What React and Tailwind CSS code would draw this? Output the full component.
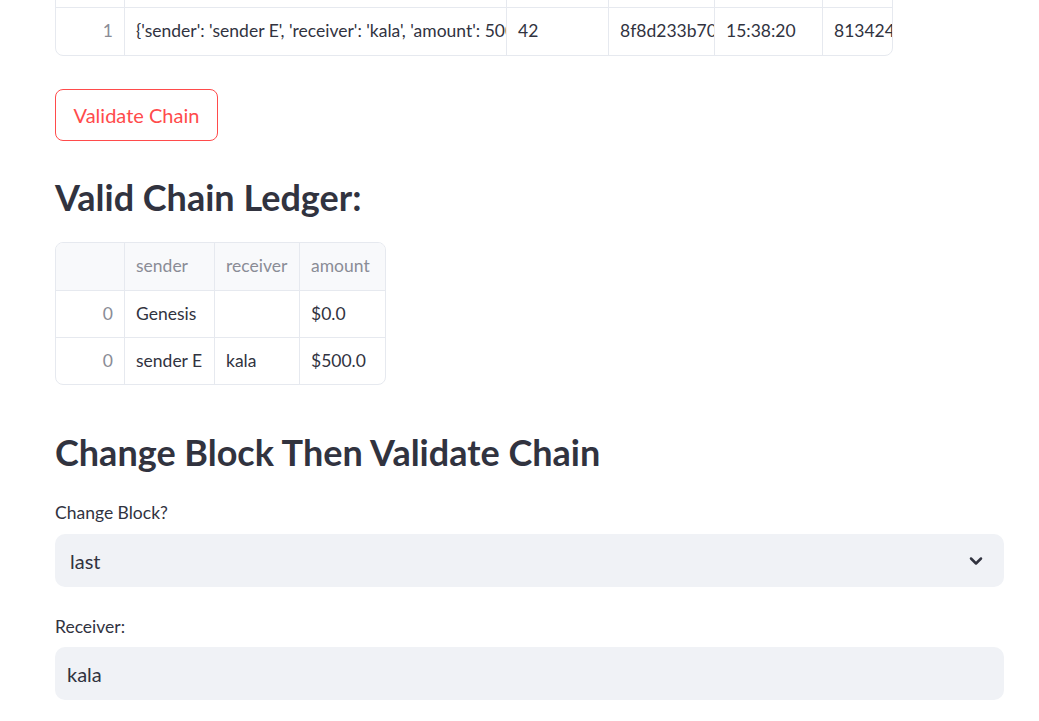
import { ChevronDown } from 'lucide-react'

const font = { fontFamily: '"Source Sans Pro", Lato, "Noto Sans", sans-serif' }

const blockCols = ['w-[69px]', 'w-[382px]', 'w-[102px]', 'w-[106px]', 'w-[108px]', 'w-[120px]']

const blockRows = [
  ['', 'data', 'nonce', 'hash', 'timestamp', 'prev_hash'],
  ['0', "{'sender': 'Genesis', 'receiver': '', 'amount': 0.0}", '0', '0c1f8a3b2e7d', '15:37:02', '0'],
  ['1', "{'sender': 'sender E', 'receiver': 'kala', 'amount': 500.0}", '42', '8f8d233b70e4a9', '15:38:20', '813424'],
]

const ledgerCols = ['w-[69px]', 'w-[90px]', 'w-[85px]', 'w-[86px]']
const ledgerRows = [
  ['0', 'Genesis', '', '$0.0'],
  ['0', 'sender E', 'kala', '$500.0'],
]

function Cell({ children, className = '', header, index }) {
  return (
    <div
      className={`shrink-0 overflow-hidden whitespace-nowrap border-r border-[#e6e9ef] px-[11px] flex items-center text-[17.5px] ${
        header || index ? 'text-[#8a8c96]' : 'text-[#31333f]'
      } ${header ? 'bg-[#f8f9fb]' : ''} ${className}`}
    >
      {children}
    </div>
  )
}

function BlockTable() {
  return (
    <div className="w-[838px] h-[57px] overflow-hidden">
      <div className="-mt-[89px] rounded-lg border border-[#e6e9ef] overflow-hidden w-[838px]">
        {blockRows.map((row, i) => (
          <div key={i} className="flex border-b border-[#e6e9ef] last:border-b-0">
            {row.map((v, j) => (
              <Cell
                key={j}
                header={i === 0}
                index={j === 0}
                className={`h-[47px] ${blockCols[j]} ${j === 0 ? 'justify-end' : ''}`}
              >
                {v}
              </Cell>
            ))}
          </div>
        ))}
      </div>
    </div>
  )
}

function LedgerTable() {
  return (
    <div className="w-[331px] rounded-lg border border-[#e6e9ef] overflow-hidden">
      <div className="flex border-b border-[#e6e9ef]">
        {['', 'sender', 'receiver', 'amount'].map((h, j) => (
          <Cell key={j} header className={`h-[47px] ${ledgerCols[j]} ${j === 3 ? 'border-r-0' : ''}`}>
            {h}
          </Cell>
        ))}
      </div>
      {ledgerRows.map((row, i) => (
        <div key={i} className="flex border-b border-[#e6e9ef] last:border-b-0">
          {row.map((v, j) => (
            <Cell
              key={j}
              index={j === 0}
              className={`h-[46px] ${ledgerCols[j]} ${j === 0 ? 'justify-end' : ''} ${j === 3 ? 'border-r-0' : ''}`}
            >
              {v}
            </Cell>
          ))}
        </div>
      ))}
    </div>
  )
}

export default function App() {
  return (
    <div className="min-h-screen bg-white pl-[55px] pr-[35px] overflow-hidden" style={font}>
      <BlockTable />

      <button className="mt-[32px] h-[52px] w-[163px] rounded-lg border border-[#ff4b4b] bg-white text-[20px] text-[#ff4b4b]">
        Validate Chain
      </button>

      <h3 className="mt-[35px] text-[36px] font-bold leading-[42px] text-[#31333f]">Valid Chain Ledger:</h3>

      <div className="mt-[24px]">
        <LedgerTable />
      </div>

      <h3 className="mt-[46px] text-[36px] font-bold leading-[42px] text-[#31333f]">
        Change Block Then Validate Chain
      </h3>

      <label className="mt-[28px] block text-[17.5px] leading-[24px] text-[#31333f]">Change Block?</label>
      <div className="mt-[9px] flex h-[53px] w-[949px] items-center justify-between rounded-[10px] bg-[#f0f2f6] pl-[15px] pr-[18px] text-[20px] text-[#31333f]">
        <span>last</span>
        <ChevronDown size={20} strokeWidth={3} className="text-[#31333f]" />
      </div>

      <label className="mt-[28px] block text-[17.5px] leading-[24px] text-[#31333f]">Receiver:</label>
      <div className="mt-[8px] flex h-[53px] w-[949px] items-center rounded-[10px] bg-[#f0f2f6] pl-[12px] text-[20px] text-[#31333f]">
        kala
      </div>
    </div>
  )
}
